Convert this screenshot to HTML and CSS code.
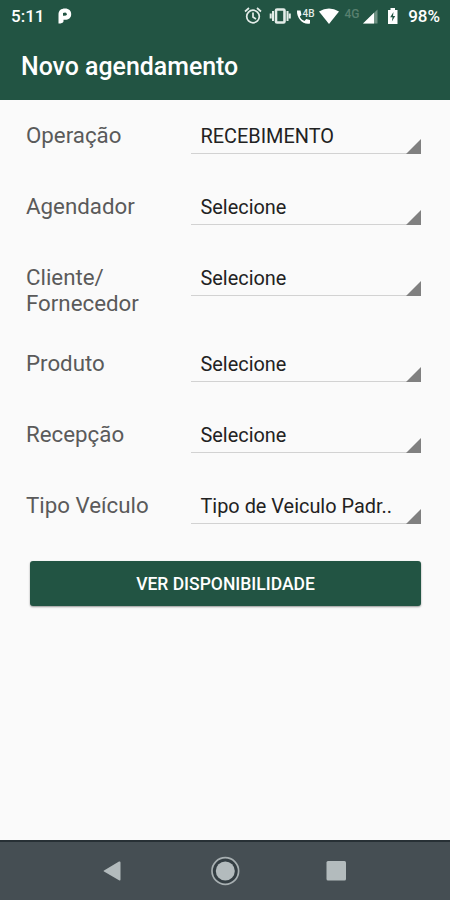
FILE: index.html
```html
<!DOCTYPE html>
<html lang="pt-BR">
<head>
  <meta charset="UTF-8">
  <title>Novo agendamento</title>
  <link rel="stylesheet" href="styles.css">
</head>
<body>

  <header>
    <div class="status-bar">
      <span class="hora">5:11</span>
      <svg class="app" width="14" height="16" viewBox="0 0 14 16">
        <path d="M.5 15.500V6.500C.5 2.500 3 .5 7 .5C11 .5 13.200 2.800 13.200 6.200C13.200 9.800 10.500 11.800 7 11.800H5.500V13.500Q4.800 15.500 .5 15.500Z" fill="#fff"/>
        <path d="M5 5Q8.800 3.800 8.800 6.200Q8.800 8.200 5 7.800Z" fill="#225443"/>
      </svg>
      <div class="icones">
        <svg width="165" height="24" viewBox="0 0 165 24">
          <!-- alarme -->
          <g fill="none" stroke="#e3ece8" stroke-width="1.7">
            <circle cx="9" cy="12.5" r="6.3"/>
            <path d="M1 7.500L5 4M17 7.500L13 4M9 8.500V13L12 15"/>
          </g>
          <!-- vibrar -->
          <rect x="32" y="5.500" width="8.500" height="13" rx="1" fill="none" stroke="#e3ece8" stroke-width="2.600"/>
          <path d="M29 7V17M43.500 7V17M26.700 9.500V14.500M45.800 9.500V14.500" fill="none" stroke="#e3ece8" stroke-width="2"/>
          <!-- chamada -->
          <path d="M53 6.500H56.500L57.500 11L55.800 12.500C57 15 58.500 16.300 60.500 17L62.200 15L66 16V19.500C59 21 52.500 14.500 53 6.500Z" fill="#fff"/>
          <text x="58.500" y="12.500" class="rede-chamada">4B</text>
          <!-- wifi -->
          <path d="M75 7.500Q85 1.500 95 7.500L85 20Z" fill="#fff"/>
          <text x="100.500" y="13.500" class="rede">4G</text>
          <!-- sinal -->
          <path d="M119 19.500L133.500 5.500V19.500Z" fill="#6f9183"/>
          <path d="M119 19.500L130 8.800V19.500Z" fill="#fff"/>
          <!-- bateria -->
          <path d="M144 6H146.500V4H151V6H153.500V20H144Z" fill="#fff"/>
          <path d="M149.500 8L146.200 13.200H148.500L147.900 17.500L151.200 12H149Z" fill="#225443"/>
        </svg>
      </div>
      <span class="bateria">98%</span>
    </div>
    <h1>Novo agendamento</h1>
  </header>

  <main>
    <div class="campo">
      <label>Operação</label>
      <div class="spinner">RECEBIMENTO</div>
    </div>
    <div class="campo">
      <label>Agendador</label>
      <div class="spinner">Selecione</div>
    </div>
    <div class="campo">
      <label>Cliente/<br>Fornecedor</label>
      <div class="spinner">Selecione</div>
    </div>
    <div class="campo">
      <label>Produto</label>
      <div class="spinner">Selecione</div>
    </div>
    <div class="campo">
      <label>Recepção</label>
      <div class="spinner">Selecione</div>
    </div>
    <div class="campo">
      <label>Tipo Veículo</label>
      <div class="spinner">Tipo de Veiculo Padr..</div>
    </div>
    <button type="button">VER DISPONIBILIDADE</button>
  </main>

  <nav>
    <svg width="30" height="30" viewBox="0 0 30 30">
      <path d="M5 14.500L20 5.500Q21.500 5 21.500 6.500V23.500Q21.500 25 20 24.200L5 15.500Q4 15 5 14.500Z" fill="#b3bbbd"/>
    </svg>
    <svg width="30" height="30" viewBox="0 0 30 30">
      <circle cx="15.300" cy="15" r="13.300" fill="#343e43" stroke="#a7afb1" stroke-width="1.700"/>
      <circle cx="15.300" cy="15" r="9.500" fill="#b3bbbd"/>
    </svg>
    <svg width="30" height="30" viewBox="0 0 30 30">
      <rect x="5.500" y="5" width="19.500" height="19.500" rx="1.500" fill="#b3bbbd"/>
    </svg>
  </nav>

</body>
</html>
```
FILE: styles.css
```css
* {
  box-sizing: border-box;
}
body {
  margin: 0;
  height: 900px;
  display: flex;
  flex-direction: column;
  background: #fafafa;
  font-family: Roboto, sans-serif;
}
header {
  height: 100px;
  background: #225443;
  color: #fff;
}
.status-bar {
  display: flex;
  align-items: center;
  height: 32px;
  padding: 0 10px 0 11px;
  font-size: 17px;
  font-weight: 500;
}
.hora {
  width: 47px;
}
.icones {
  display: flex;
  margin-left: auto;
  margin-right: -1px;
}
.rede-chamada {
  font-size: 10px;
  fill: #e3ece8;
}
.rede {
  font-size: 12px;
  fill: #58806f;
}
h1 {
  margin: 19px 0 0 21px;
  font-size: 24.9px;
  line-height: 31px;
  font-weight: 500;
}
main {
  flex: 1;
  padding: 19px 29px 0 26px;
}
.campo {
  display: grid;
  grid-template-columns: 164.5px 230.5px;
  align-items: start;
  min-height: 35px;
  margin-bottom: 36px;
}
label {
  padding-top: 3px;
  margin-bottom: -5px;
  font-size: 22.3px;
  line-height: 26px;
  color: #5a5a5a;
}
.spinner {
  position: relative;
  height: 35px;
  padding-left: 10px;
  border-bottom: 1px solid #d2d2d2;
  font-size: 19.9px;
  line-height: 35px;
  color: #222;
  white-space: nowrap;
}
.spinner::after {
  content: "";
  position: absolute;
  right: 0;
  bottom: -1px;
  border-left: 15px solid transparent;
  border-bottom: 15px solid #808080;
}
button {
  display: block;
  width: 391px;
  height: 45px;
  margin: 37px 0 0 4px;
  border: 0;
  border-radius: 3px;
  background: #225443;
  box-shadow: 0 1px 2px rgba(0, 0, 0, 0.4);
  color: #fff;
  font-family: Roboto, sans-serif;
  font-size: 17.5px;
  font-weight: 500;
}
nav {
  display: flex;
  justify-content: center;
  gap: 81px;
  height: 60px;
  padding-top: 14px;
  border-top: 2px solid #273035;
  background: #454e53;
}
```
